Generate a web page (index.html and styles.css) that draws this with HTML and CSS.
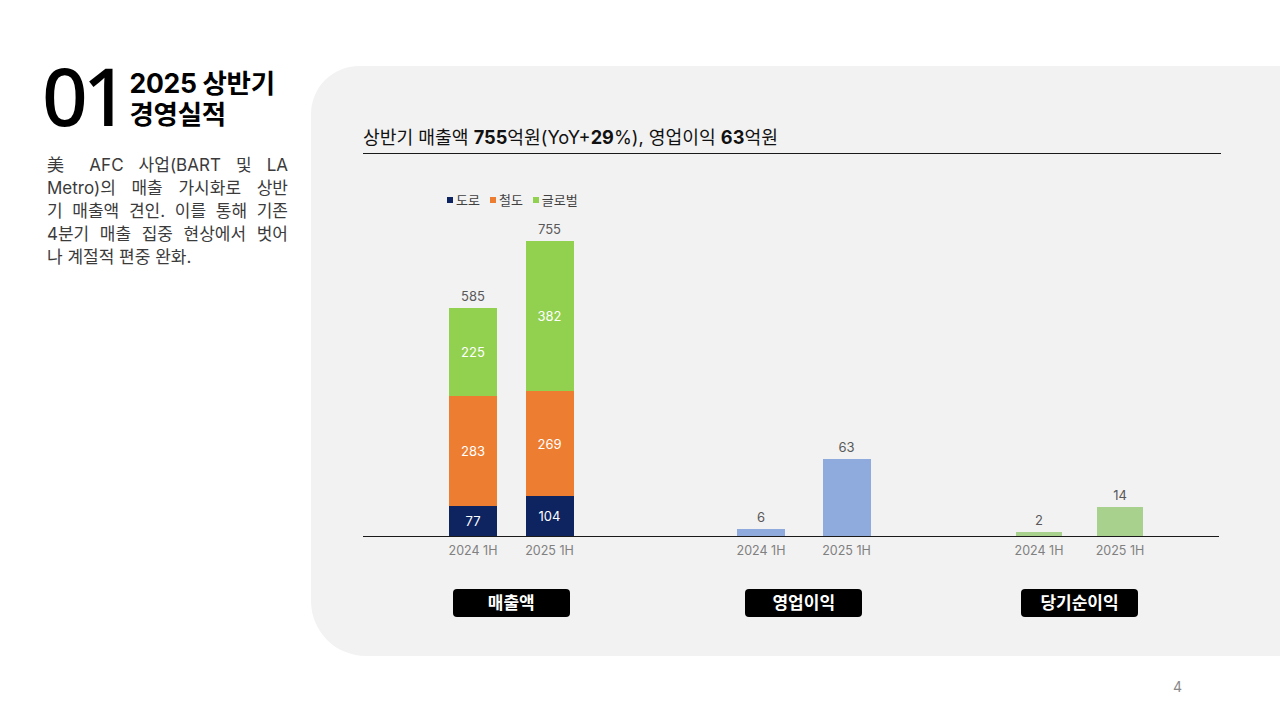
FILE: index.html
```html
<!DOCTYPE html>
<html lang="ko">
<head>
<meta charset="utf-8">
<title>2025 상반기 경영실적</title>
<link rel="stylesheet" href="styles.css">
</head>
<body>
<div class="slide">
  <div class="main">
    <aside class="side">
      <div class="head">
        <div class="num">01</div>
        <h1 class="htitle"><span class="hl">2025 상반기</span><span class="hl">경영실적</span></h1>
      </div>
      <p class="desc">
        <span class="ln">美 AFC 사업(BART 및 LA</span>
        <span class="ln">Metro)의 매출 가시화로 상반</span>
        <span class="ln">기 매출액 견인. 이를 통해 기존</span>
        <span class="ln">4분기 매출 집중 현상에서 벗어</span>
        <span class="ln last">나 계절적 편중 완화.</span>
      </p>
    </aside>
    <section class="panel">
      <h2 class="ptitle">상반기 매출액 <b>755</b>억원(YoY+<b>29</b>%), 영업이익 <b>63</b>억원</h2>
      <div class="legend">
        <span class="lg"><i class="sw road"></i>도로</span>
        <span class="lg"><i class="sw rail"></i>철도</span>
        <span class="lg"><i class="sw glob"></i>글로벌</span>
      </div>
      <div class="chart">
        <div class="plot">
          <div class="grp g1">
            <div class="col">
              <span class="val">585</span>
              <div class="seg glob wide" style="height:88px">225</div>
              <div class="seg rail wide" style="height:110px">283</div>
              <div class="seg road wide" style="height:30px">77</div>
            </div>
            <div class="col">
              <span class="val">755</span>
              <div class="seg glob wide" style="height:150px">382</div>
              <div class="seg rail wide" style="height:105px">269</div>
              <div class="seg road wide" style="height:40px">104</div>
            </div>
          </div>
          <div class="grp g2">
            <div class="col">
              <span class="val">6</span>
              <div class="seg op wide" style="height:7px"></div>
            </div>
            <div class="col">
              <span class="val">63</span>
              <div class="seg op wide" style="height:77px"></div>
            </div>
          </div>
          <div class="grp g3">
            <div class="col">
              <span class="val">2</span>
              <div class="seg net narrow" style="height:4px"></div>
            </div>
            <div class="col">
              <span class="val">14</span>
              <div class="seg net narrow" style="height:29px"></div>
            </div>
          </div>
        </div>
        <div class="xrow">
          <div class="grp g1"><span class="xl">2024 1H</span><span class="xl">2025 1H</span></div>
          <div class="grp g2"><span class="xl">2024 1H</span><span class="xl">2025 1H</span></div>
          <div class="grp g3"><span class="xl">2024 1H</span><span class="xl">2025 1H</span></div>
        </div>
        <div class="brow">
          <div class="grp g1"><span class="badge">매출액</span></div>
          <div class="grp g2"><span class="badge">영업이익</span></div>
          <div class="grp g3"><span class="badge">당기순이익</span></div>
        </div>
      </div>
    </section>
  </div>
  <footer class="foot">4</footer>
</div>
</body>
</html>
```

FILE: styles.css
```css
html, body {
  margin: 0;
  padding: 0;
}
body {
  background: #ffffff;
  font-family: "Inter", "Noto Sans CJK KR", "Noto Sans", sans-serif;
  color: #111;
}
.slide {
  width: 1280px;
  height: 720px;
  display: flex;
  flex-direction: column;
  overflow: hidden;
}
.main {
  display: flex;
  height: 656px;
  flex: none;
}
.side {
  width: 311px;
  flex: none;
  box-sizing: border-box;
  padding: 55px 0 0 44px;
}
.head {
  display: flex;
  align-items: flex-start;
}
.num {
  font-family: "Noto Sans", "Noto Sans CJK KR", sans-serif;
  font-size: 80px;
  line-height: 80px;
  font-weight: 500;
  letter-spacing: -5px;
  color: #000;
  margin-left: -2px;
}
.htitle {
  margin: 13px 0 0 6px;
  font-size: 26.5px;
  font-weight: 700;
  color: #000;
  letter-spacing: -0.3px;
}
.hl {
  display: block;
  line-height: 31px;
  height: 31px;
}
.desc {
  margin: 19px 0 0 3px;
  width: 241px;
  font-size: 17px;
  line-height: 23px;
  color: #3b3b3b;
}
.ln {
  display: block;
  text-align: justify;
  text-align-last: justify;
  white-space: nowrap;
}
.ln.last {
  text-align-last: left;
}
.panel {
  flex: 1;
  margin-top: 66px;
  height: 590px;
  box-sizing: border-box;
  background: #f2f2f2;
  border-radius: 48px 0 0 55px;
  padding: 0 59px 0 52px;
  display: flex;
  flex-direction: column;
}
.ptitle {
  margin: 0;
  padding: 58px 0 3px 0;
  font-size: 18.2px;
  line-height: 26px;
  font-weight: 400;
  color: #111;
  border-bottom: 1px solid #1a1a1a;
}
.ptitle b {
  font-weight: 700;
}
.legend {
  margin-top: 38px;
  padding-left: 84px;
  display: flex;
  gap: 10px;
  font-size: 13px;
  line-height: 16px;
  color: #404040;
}
.lg {
  display: flex;
  align-items: center;
}
.sw {
  display: inline-block;
  width: 6px;
  height: 6px;
  margin-right: 3px;
}
.road { background: #0e2461; }
.rail { background: #ed7d31; }
.glob { background: #92d050; }
.op { background: #8faadc; }
.net { background: #a9d18e; }
.chart {
  display: flex;
  flex-direction: column;
  width: 856px;
}
.plot {
  height: 328px;
  border-bottom: 1px solid #1a1a1a;
  display: flex;
  align-items: flex-end;
}
.grp {
  display: flex;
  flex: none;
}
.g1 { margin-left: 80px; gap: 16.5px; width: 136.5px; }
.g2 { margin-left: 151.5px; gap: 25.5px; width: 145.5px; }
.g3 { margin-left: 132.5px; gap: 21px; width: 141px; }
.col {
  width: 60px;
  display: flex;
  flex-direction: column;
  align-items: center;
  justify-content: flex-end;
}
.val {
  font-size: 13px;
  line-height: 16px;
  color: #595959;
  margin-bottom: 4px;
}
.seg {
  display: flex;
  align-items: center;
  justify-content: center;
  color: #fff;
  font-size: 13px;
  flex: none;
}
.wide { width: 48px; }
.narrow { width: 46px; }
.xrow {
  display: flex;
  margin-top: 6px;
}
.xl {
  width: 60px;
  text-align: center;
  font-size: 12.5px;
  line-height: 16px;
  color: #808080;
  white-space: nowrap;
}
.brow {
  display: flex;
  margin-top: 30px;
}
.brow .grp {
  justify-content: center;
}
.badge {
  display: block;
  width: 117px;
  height: 28px;
  background: #000;
  border-radius: 4px;
  color: #fff;
  font-size: 17px;
  font-weight: 700;
  line-height: 28px;
  text-align: center;
}
.foot {
  height: 64px;
  box-sizing: border-box;
  padding: 23px 98px 0 0;
  text-align: right;
  font-size: 14px;
  line-height: 16px;
  color: #888;
}
```
